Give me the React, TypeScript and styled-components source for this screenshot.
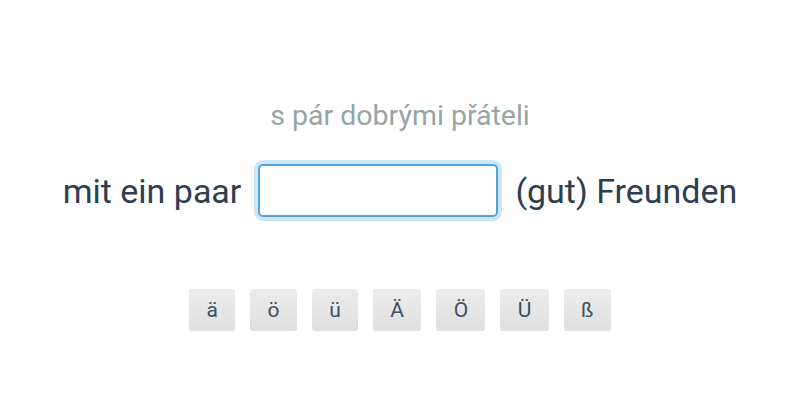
import React, { useState } from 'react';
import styled, { createGlobalStyle } from 'styled-components';

const GlobalStyle = createGlobalStyle`
  html, body {
    margin: 0;
    padding: 0;
    background: #fff;
    font-family: Roboto, "Noto Sans", sans-serif;
  }
`;

const Page = styled.div`
  width: 800px;
  height: 400px;
  display: flex;
  flex-direction: column;
  align-items: center;
  box-sizing: border-box;
  padding-top: 96px;
`;

const Hint = styled.div`
  font-size: 28.5px;
  color: #95a5a6;
  line-height: 40px;
`;

const Sentence = styled.div`
  display: flex;
  align-items: center;
  gap: 17px;
  margin-top: 28px;
  font-size: 34px;
  color: #2c3e50;
`;

const Answer = styled.input`
  width: 240px;
  height: 53px;
  box-sizing: border-box;
  border: 2px solid #4ea3e3;
  border-radius: 5px;
  box-shadow: 0 0 0 4px rgba(93, 173, 226, 0.3);
  outline: none;
  font-family: inherit;
  font-size: 28px;
  color: #2c3e50;
  padding: 0 10px;
`;

const Keys = styled.div`
  display: flex;
  gap: 15px;
  margin-top: 72px;
`;

const Key = styled.button`
  height: 42px;
  min-width: 46px;
  padding: 0 17.3px;
  border: none;
  border-radius: 3px;
  background: linear-gradient(#ececec, #dfdfdf);
  font-family: inherit;
  font-size: 21px;
  color: #3d4f63;
  cursor: pointer;
`;

const letters = ['ä', 'ö', 'ü', 'Ä', 'Ö', 'Ü', 'ß'];

export default function App() {
  const [value, setValue] = useState('');
  return (
    <Page>
      <GlobalStyle />
      <Hint>s pár dobrými přáteli</Hint>
      <Sentence>
        <span>mit ein paar</span>
        <Answer value={value} onChange={(e) => setValue(e.target.value)} />
        <span>(gut) Freunden</span>
      </Sentence>
      <Keys>
        {letters.map((l) => (
          <Key key={l} onClick={() => setValue(value + l)}>
            {l}
          </Key>
        ))}
      </Keys>
    </Page>
  );
}
